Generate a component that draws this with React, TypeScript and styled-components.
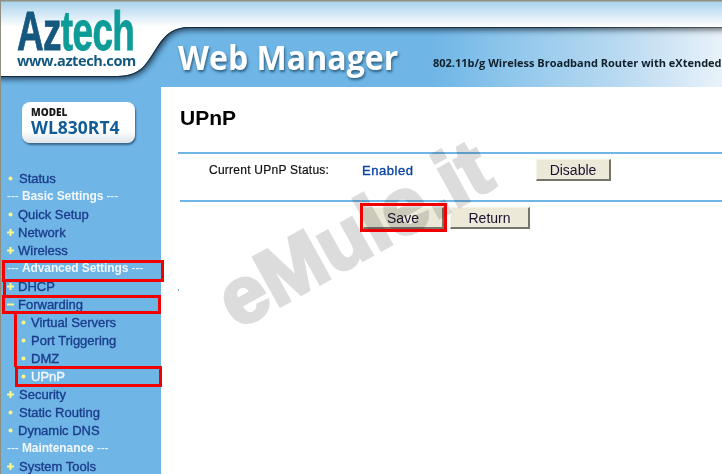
import React from "react";
import styled, { createGlobalStyle } from "styled-components";

const Global = createGlobalStyle`
  html, body { margin: 0; padding: 0; background: #fff; overflow: hidden; }
  body { font-family: "Liberation Sans", Arial, sans-serif; }
`;

const Page = styled.div`
  position: relative;
  width: 722px;
  height: 474px;
  overflow: hidden;
  box-sizing: border-box;
  display: flex;
  flex-direction: column;
  background: #fff;
`;

/* ---------- header ---------- */
const Header = styled.header`
  position: relative;
  height: 87px;
  flex-shrink: 0;
  display: flex;
  align-items: flex-start;
`;
const BannerArt = styled.svg`
  position: absolute;
  inset: 0;
`;
const Logo = styled.div`
  position: relative;
  width: 178px;
  flex-shrink: 0;
  padding: 9px 0 0 17px;
  box-sizing: border-box;
`;
const LogoWord = styled.div`
  font-size: 56px;
  line-height: 44px;
  height: 44px;
  font-weight: 700;
  letter-spacing: -1px;
  white-space: nowrap;
  transform: scaleX(0.66);
  transform-origin: left center;
  -webkit-text-stroke: 0.8px currentColor;
`;
const LogoAz = styled.span`
  color: #14577f;
`;
const LogoTech = styled.span`
  color: #0e9c98;
`;
const LogoUrl = styled.div`
  font-family: "Open Sans", sans-serif;
  font-size: 14.5px;
  line-height: 15px;
  font-weight: 700;
  color: #14577f;
  white-space: nowrap;
  letter-spacing: -0.35px;
`;
const Product = styled.div`
  position: relative;
  font-family: "Open Sans", sans-serif;
  font-size: 34.5px;
  line-height: 44px;
  font-weight: 700;
  color: #fff;
  margin-top: 35px;
  white-space: nowrap;
  transform: scaleX(0.93);
  transform-origin: left center;
  text-shadow: 1px 2px 3px rgba(20, 60, 90, 0.75);
`;
const Tagline = styled.div`
  position: absolute;
  left: 433px;
  top: 55px;
  font-family: "Open Sans", sans-serif;
  font-size: 11px;
  line-height: 16px;
  font-weight: 700;
  color: #10202c;
  white-space: nowrap;
`;

/* ---------- body ---------- */
const Body = styled.div`
  flex: 1;
  display: flex;
  min-height: 0;
`;
const Sidebar = styled.nav`
  width: 161px;
  flex-shrink: 0;
  background: #6fb6e6;
  border-left: 1px solid #8f8f80;
  box-sizing: border-box;
  padding-top: 15px;
`;
const Badge = styled.div`
  width: 113px;
  height: 41px;
  margin: 0 0 26px 21px;
  box-sizing: border-box;
  padding: 5px 0 0 9px;
  border-radius: 8px;
  background: linear-gradient(#fff 70%, #dfe4e8);
  box-shadow: 1px 2px 2px rgba(30, 60, 90, 0.65);
`;
const BadgeLabel = styled.div`
  font-family: "Open Sans", sans-serif;
  font-size: 10px;
  line-height: 11px;
  font-weight: 800;
  color: #1a1a1a;
`;
const BadgeModel = styled.div`
  font-family: "Open Sans", sans-serif;
  font-size: 17.5px;
  line-height: 19px;
  font-weight: 700;
  color: #135c98;
  white-space: nowrap;
`;
const NavRow = styled.div<{ $pad: number }>`
  height: 18px;
  display: flex;
  align-items: center;
  padding-left: ${(p) => p.$pad}px;
  box-sizing: border-box;
`;
const IconSlot = styled.svg<{ $gap: number }>`
  width: 7px;
  height: 7px;
  flex-shrink: 0;
  margin-right: ${(p) => p.$gap}px;
`;
const NavLabel = styled.span<{ $active?: boolean }>`
  font-size: 13px;
  font-weight: 400;
  -webkit-text-stroke: 0.35px currentColor;
  color: ${(p) => (p.$active ? "#f4f8ff" : "#1c3c8c")};
  white-space: nowrap;
`;
const SectionLabel = styled.span`
  font-size: 12px;
  letter-spacing: -0.1px;
  color: #f2f7fc;
  white-space: nowrap;
`;

/* ---------- main ---------- */
const Main = styled.main`
  flex: 1;
  min-width: 0;
  padding: 21px 0 0 17px;
`;
const Title = styled.h1`
  margin: 0;
  height: 44px;
  font-size: 21px;
  line-height: 20px;
  font-weight: 700;
  color: #000;
  padding-left: 2px;
`;
const Rule = styled.hr<{ $inset?: number }>`
  border: 0;
  height: 2px;
  margin: 0 0 0 ${(p) => p.$inset ?? 0}px;
  background: #6fb6e6;
`;
const StatusRow = styled.div`
  height: 46px;
  display: flex;
  align-items: flex-start;
  padding: 5px 0 0 31px;
  box-sizing: border-box;
`;
const StatusLabel = styled.span`
  width: 153px;
  margin-top: 3px;
  font-size: 12px;
  line-height: 16px;
  letter-spacing: 0.25px;
  color: #101010;
  -webkit-text-stroke: 0.2px #101010;
`;
const StatusValue = styled.span`
  width: 174px;
  margin-top: 3px;
  font-size: 13px;
  line-height: 18px;
  letter-spacing: 0.55px;
  color: #0a44a8;
  -webkit-text-stroke: 0.35px #0a44a8;
`;
const Button = styled.button<{ $w: number }>`
  width: ${(p) => p.$w}px;
  height: 22px;
  padding: 0;
  background: #ece9d8;
  border: 1px solid;
  border-color: #f6f4ea #77756a #77756a #f6f4ea;
  border-width: 1px 2px 2px 1px;
  font-family: "Liberation Sans", Arial, sans-serif;
  font-size: 14px;
  color: #1c1030;
`;
const Actions = styled.div`
  display: flex;
  gap: 6px;
  padding: 5px 0 0 185px;
`;
const Speck = styled.div`
  width: 1px;
  height: 2px;
  margin-top: 60px;
  background: #6fb6e6;
`;

/* ---------- overlays ---------- */
const Watermark = styled.div`
  position: absolute;
  left: 205px;
  top: 192px;
  font-size: 80px;
  line-height: 84px;
  font-weight: 700;
  color: #dcdcdc;
  -webkit-text-stroke: 3.5px #dcdcdc;
  white-space: nowrap;
  transform: rotate(-29deg);
  mix-blend-mode: multiply;
  pointer-events: none;
`;
const Mark = styled.div<{ $x: number; $y: number; $w: number; $h: number }>`
  position: absolute;
  left: ${(p) => p.$x}px;
  top: ${(p) => p.$y}px;
  width: ${(p) => p.$w}px;
  height: ${(p) => p.$h}px;
  box-sizing: border-box;
  border: 3px solid #f20000;
`;
const MarkBar = styled.div<{ $x: number; $y: number; $h: number }>`
  position: absolute;
  left: ${(p) => p.$x}px;
  top: ${(p) => p.$y}px;
  width: 3px;
  height: ${(p) => p.$h}px;
  background: #f20000;
`;

type Kind = "dot" | "plus" | "minus";
type Item =
  | { section: string }
  | { label: string; icon: Kind; wide?: boolean; sub?: boolean; active?: boolean };

const items: Item[] = [
  { label: "Status", icon: "dot", wide: true },
  { section: "Basic Settings" },
  { label: "Quick Setup", icon: "dot" },
  { label: "Network", icon: "plus" },
  { label: "Wireless", icon: "plus" },
  { section: "Advanced Settings" },
  { label: "DHCP", icon: "plus" },
  { label: "Forwarding", icon: "minus" },
  { label: "Virtual Servers", icon: "dot", sub: true },
  { label: "Port Triggering", icon: "dot", sub: true },
  { label: "DMZ", icon: "dot", sub: true },
  { label: "UPnP", icon: "dot", sub: true, active: true },
  { label: "Security", icon: "plus", wide: true },
  { label: "Static Routing", icon: "dot", wide: true },
  { label: "Dynamic DNS", icon: "dot" },
  { section: "Maintenance" },
  { label: "System Tools", icon: "plus", wide: true },
];

const NavIcon = ({ kind, gap }: { kind: Kind; gap: number }) => (
  <IconSlot $gap={gap} viewBox="0 0 7 7">
    {kind === "dot" && <circle cx="3.5" cy="3.5" r="2" fill="#fff78a" />}
    {kind === "plus" && <path d="M3.5 0v7M0 3.5h7" stroke="#fff78a" strokeWidth="2" />}
    {kind === "minus" && <path d="M0 3.5h7" stroke="#fff78a" strokeWidth="2" />}
  </IconSlot>
);

const Banner = () => (
  <BannerArt width="722" height="87" viewBox="0 0 722 87">
    <defs>
      <linearGradient id="sky" x1="0" y1="0" x2="0" y2="1">
        <stop offset="0" stopColor="#a5cfec" />
        <stop offset="1" stopColor="#ffffff" />
      </linearGradient>
      <linearGradient id="band" x1="0" y1="0" x2="1" y2="0">
        <stop offset="0" stopColor="#6fb6e6" />
        <stop offset="0.6" stopColor="#6fb6e6" />
        <stop offset="0.72" stopColor="#93c8ec" />
        <stop offset="0.86" stopColor="#b9daf1" />
        <stop offset="1" stopColor="#e9f2fa" />
      </linearGradient>
      <linearGradient id="edge" x1="0" y1="0" x2="1" y2="0">
        <stop offset="0" stopColor="#14283c" />
        <stop offset="0.75" stopColor="#1c3346" />
        <stop offset="1" stopColor="#55595c" />
      </linearGradient>
      <filter id="soft" x="-5%" y="-30%" width="110%" height="160%">
        <feGaussianBlur stdDeviation="3" />
      </filter>
      <clipPath id="bandClip">
        <path d="M0 76H118C142 76 147 62 157 47C166 33 174 27 190 27H722V87H0Z" />
      </clipPath>
    </defs>
    <rect width="722" height="27" fill="url(#sky)" />
    <rect y="27" width="722" height="60" fill="#fff" />
    <path d="M0 76H118C142 76 147 62 157 47C166 33 174 27 190 27H722V87H0Z" fill="url(#band)" />
    <g clipPath="url(#bandClip)">
      <path
        d="M-10 75H118C142 75 147 61 157 46C166 32 174 26 190 26H740"
        fill="none"
        stroke="url(#edge)"
        strokeWidth="7"
        filter="url(#soft)"
      />
      <path
        d="M-10 76H118C142 76 147 62 157 47C166 33 174 27 190 27H740"
        fill="none"
        stroke="url(#edge)"
        strokeWidth="2"
      />
    </g>
    <rect width="722" height="1.5" fill="#8f8f80" />
    <rect width="1" height="87" fill="#8f8f80" />
  </BannerArt>
);

export default function App() {
  return (
    <Page>
      <Global />
      <Header>
        <Banner />
        <Logo>
          <LogoWord>
            <LogoAz>Az</LogoAz>
            <LogoTech>tech</LogoTech>
          </LogoWord>
          <LogoUrl>www.aztech.com</LogoUrl>
        </Logo>
        <Product>Web Manager</Product>
        <Tagline>802.11b/g Wireless Broadband Router with eXtended</Tagline>
      </Header>
      <Body>
        <Sidebar>
          <Badge>
            <BadgeLabel>MODEL</BadgeLabel>
            <BadgeModel>WL830RT4</BadgeModel>
          </Badge>
          {items.map((it) =>
            "section" in it ? (
              <NavRow key={it.section} $pad={6}>
                <SectionLabel>
                  --- <b>{it.section}</b> ---
                </SectionLabel>
              </NavRow>
            ) : (
              <NavRow key={it.label} $pad={it.sub ? 19 : 6}>
                <NavIcon kind={it.icon} gap={it.wide ? 5 : 4} />
                <NavLabel $active={it.active}>{it.label}</NavLabel>
              </NavRow>
            )
          )}
        </Sidebar>
        <Main>
          <Title>UPnP</Title>
          <Rule />
          <StatusRow>
            <StatusLabel>Current UPnP Status:</StatusLabel>
            <StatusValue>Enabled</StatusValue>
            <Button $w={75}>Disable</Button>
          </StatusRow>
          <Rule $inset={2} />
          <Actions>
            <Button $w={81}>Save</Button>
            <Button $w={80}>Return</Button>
          </Actions>
          <Speck />
        </Main>
      </Body>
      <Watermark>eMule.it</Watermark>
      <Mark $x={2} $y={260} $w={162} $h={22} />
      <Mark $x={2} $y={295} $w={159} $h={19} />
      <MarkBar $x={3} $y={281} $h={15} />
      <MarkBar $x={14} $y={313} $h={54} />
      <Mark $x={15} $y={366} $w={147} $h={21} />
      <Mark $x={360} $y={203} $w={87} $h={29} />
    </Page>
  );
}
